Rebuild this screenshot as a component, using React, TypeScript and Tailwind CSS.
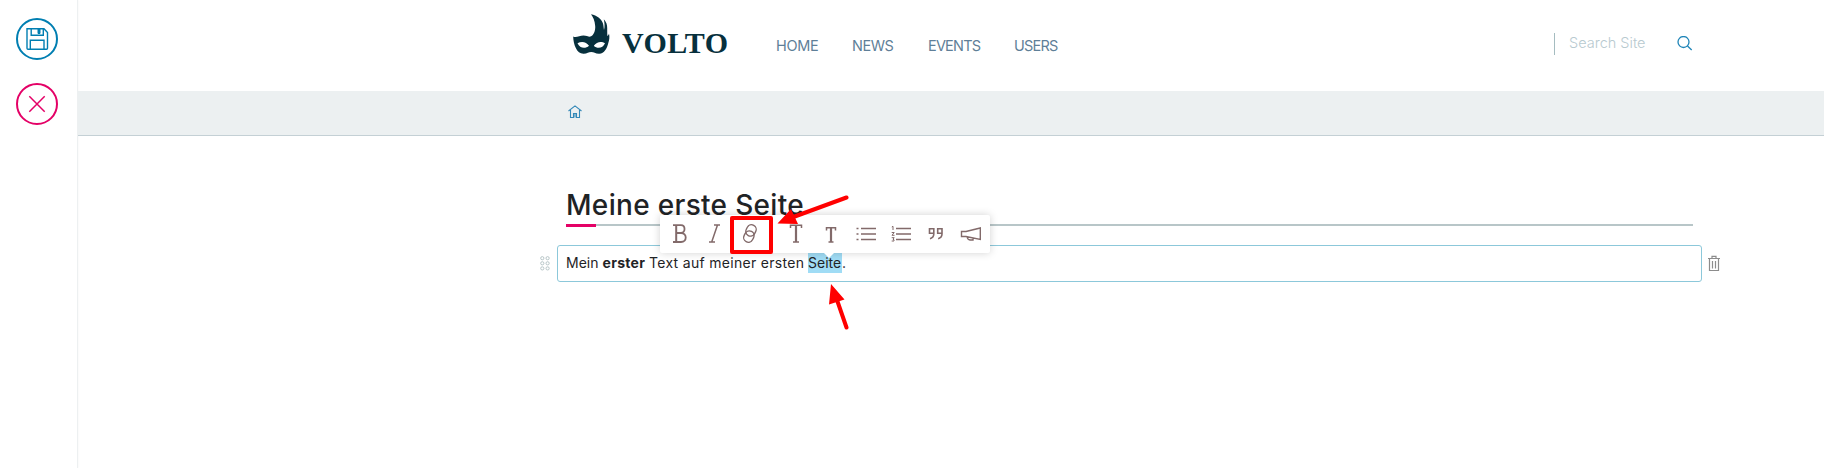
import React from "react";

const NAV = [
  { label: "HOME", box: "w-[76px]", track: "tracking-[-0.3px]" },
  { label: "NEWS", box: "w-[76px]", track: "tracking-[-0.45px]" },
  { label: "EVENTS", box: "w-[86px]", track: "tracking-[-0.8px]" },
  { label: "USERS", box: "w-[60px]", track: "tracking-[-0.8px]" },
];

function MaskLogo() {
  return (
    <svg className="block h-[41px] w-[37px]" viewBox="0 0 37 41" fill="#07303d">
      <path
        fillRule="evenodd"
        d="M.2 22.4C3 24 6.5 21.6 10.500 21.600C13.500 21.600 15.500 23 17.500 22.600C20.500 21.500 22.600 17 22.200 12C21.800 6.500 20 3 18 .300C24 1.500 28.300 5 29.800 9C30.600 11.500 30.600 14 31 16C32 12.500 31.600 9 30.800 5.200C33.500 8 34.200 11 34.200 14C34.200 17 34.200 19 34.400 22C35.400 21.300 35.800 20.500 36 19.500C36.800 23 36.300 26 35.300 29C34 34.500 31.300 39.500 26.300 39.700C22.300 39.800 21 38 18.200 38C15.500 38 14.200 39.800 10.300 39.700C3.800 39.500.300 30.500.200 22.400ZM4.500 29.300C7 34.700 12.500 35 16 31.700C13.500 27.800 8.500 26.800 4.500 29.300ZM20.800 31.700C24 35 29.700 34.700 32 29.300C28.500 26.800 23.500 27.800 20.800 31.700Z"
      />
    </svg>
  );
}

function SaveIcon() {
  return (
    <svg className="h-[42px] w-[42px]" viewBox="0 0 42 42" fill="none" stroke="#007eb1">
      <circle cx="21" cy="21" r="20" strokeWidth="2" />
      <g strokeWidth="1.4">
        <path d="M11 10.800H28L31.500 14.500V30.300Q31.500 31.200 30.500 31.200H12Q11 31.200 11 30.300Z" />
        <path d="M15.200 11V17.300H27.300V11M14.300 31V22.200H28V31" />
      </g>
      <path d="M22 11H24V15.500H22Z" fill="#007eb1" strokeWidth="1" />
    </svg>
  );
}

function CancelIcon() {
  return (
    <svg className="h-[42px] w-[42px]" viewBox="0 0 42 42" fill="none" stroke="#e40166">
      <circle cx="21" cy="21" r="20" strokeWidth="2" />
      <path d="M13.300 13.300L28.700 28.700M28.700 13.300L13.300 28.700" strokeWidth="1.500" />
    </svg>
  );
}

function Tool({ children }: { children: React.ReactNode }) {
  return (
    <button className="block h-6 w-6">
      <svg className="block h-6 w-6" viewBox="0 0 24 24" fill="none" stroke="#826a6a" strokeWidth="1.400">
        {children}
      </svg>
    </button>
  );
}

function Toolbar() {
  return (
    <div className="absolute left-[94px] top-0 flex h-[38px] w-[330px] items-center rounded-[2px] bg-white pl-2 shadow-[0_0_8px_rgba(0,0,0,0.18)]">
      <div className="flex gap-[11px]">
        <Tool>
          <path d="M5 3.200H13C17.700 3.200 17.700 11 13 11H8.500M13 11C19.300 11 19.300 20 13 20H5" strokeWidth="1.800" />
          <path d="M8.200 4V20" strokeWidth="2" />
        </Tool>
        <Tool>
          <path d="M11 3H17M6 20H12M14.500 3L8.700 20" strokeWidth="1.500" />
        </Tool>
        <Tool>
          <g transform="rotate(28 12 12)">
            <rect x="6.500" y="2.600" width="9.400" height="11.600" rx="4.700" />
            <rect x="7.500" y="9" width="9.400" height="11.600" rx="4.700" />
          </g>
        </Tool>
      </div>
      <div className="flex gap-[11px] pl-[22px]">
        <Tool>
          <path d="M6.500 6V3.300H17.500V6M9 20H15" strokeWidth="1.500" />
          <path d="M12 4V20" strokeWidth="2.200" />
        </Tool>
        <Tool>
          <path d="M7.500 8.500V5.800H16.500V8.500M9.500 20H14.500" strokeWidth="1.500" />
          <path d="M12 6V20" strokeWidth="2.200" />
        </Tool>
        <Tool>
          <path d="M7 6.500H22M7 12H22M7 17.500H22M2.500 6.500H4.500M2.500 12H4.500M2.500 17.500H4.500" strokeWidth="1.500" />
        </Tool>
        <Tool>
          <path d="M7 6.500H22M7 12H22M7 17.500H22" strokeWidth="1.500" />
          <path d="M2.800 5L4 4.300V8M2.700 10.500H5.200L3 13.300H5.500M2.700 15.700H5.200L4 17.200Q5.500 17.500 5 19H2.700" strokeWidth="1" />
        </Tool>
        <Tool>
          <path d="M9.800 11.300H5.500V6.700H9.800V12Q9.800 15.500 6 16.700M18 11.300H13.700V6.700H18V12Q18 15.500 14.200 16.700" strokeWidth="1.600" />
        </Tool>
        <Tool>
          <path d="M2.500 9.500H7L21.300 6V17.500L7 14.500H2.500ZM8.200 15Q8.500 17.700 11 18H14V16.500" strokeWidth="1.400" />
        </Tool>
      </div>
      <span className="absolute left-[164px] top-[38px] h-0 w-0 border-x-[5px] border-t-[5px] border-x-transparent border-t-white" />
    </div>
  );
}

function Annotations() {
  return (
    <>
      <div className="absolute left-[164px] top-[1px] h-[38px] w-[43px] rounded-[2px] border-[4px] border-[#ff0000]" />
      <svg className="absolute left-[204px] top-[-24px] h-[150px] w-[90px]" viewBox="770 191 90 150" fill="#ff0000" stroke="#ff0000">
        <path d="M846.500 197.500L792 217.500M846.500 327.500L837 300" strokeWidth="4" strokeLinecap="round" />
        <path d="M777.500 223.500L791 209L798 224ZM831 284L829 304.500L844.500 299.500Z" stroke="none" />
      </svg>
    </>
  );
}

export default function App() {
  return (
    <div className="flex h-[468px] w-[1824px] overflow-hidden bg-white font-['Inter','Noto_Sans',sans-serif]">
      <aside className="flex w-[78px] shrink-0 flex-col gap-[23px] border-r border-[#edf0f1] pl-4 pt-[18px] shadow-[0_0_2px_rgba(0,0,0,0.06)]">
        <SaveIcon />
        <CancelIcon />
      </aside>
      <div className="flex min-w-0 flex-1 flex-col">
        <header className="flex h-[91px] shrink-0 items-start pl-[495px]">
          <div className="flex w-[203px] pt-[14px]">
            <MaskLogo />
            <span className="ml-[12px] mt-[11px] font-['Liberation_Serif',serif] text-[30px] font-bold leading-[36px] tracking-[0.4px] text-[#07303d]">VOLTO</span>
          </div>
          <nav className="flex pt-[35px] text-[14.5px] leading-[22px] text-[#5f7f98]">
            {NAV.map((n) => (
              <a key={n.label} className={n.box + " " + n.track}>{n.label}</a>
            ))}
          </nav>
          <div className="ml-[480px] mt-[33px] flex h-[22px] items-center border-l border-[#a5bcc0] pl-[14px]">
            <span className="w-[108px] pb-[2px] text-[14.5px] font-light leading-[18px] text-[#b8cad0]">Search Site</span>
            <svg className="h-4 w-4" viewBox="0 0 16 16" fill="none" stroke="#1f85b8" strokeWidth="1.300">
              <circle cx="6.500" cy="6" r="5.500" />
              <path d="M10.500 10L14.700 14" />
            </svg>
          </div>
        </header>
        <div className="h-[45px] shrink-0 border-b border-[#c4d0d5] bg-[#ecf0f1] pl-[490px] pt-[14px]">
          <svg className="h-[14px] w-[14px]" viewBox="0 0 14 14" fill="none" stroke="#3489b8" strokeWidth="1.100">
            <path d="M.500 6L7 .900L13.500 6M2.500 5V12.500H5.500V8.500H8.500V12.500H11.500V5M7 8.500V12.500" />
          </svg>
        </div>
        <main className="pl-[488px] pt-[48px]">
          <h1 className="h-[40px] w-[1127px] whitespace-nowrap text-[28px] font-medium leading-[42px] tracking-[0.32px] text-[#1f2326]">Meine erste Seite</h1>
          <div className="flex h-[3px] w-[1127px] items-start">
            <span className="h-[3px] w-[30px] bg-[#e40166]" />
            <span className="h-[2px] flex-1 bg-[#b8c6c8]" />
          </div>
          <div className="relative ml-[-26px] mt-[18px] flex h-[37px] items-center">
            <svg className="mr-[7px] h-4 w-[10px]" viewBox="0 0 10 16" fill="none" stroke="#b8c6c8" strokeWidth="1">
              {[2.2, 7.3, 12.4].map((y) => (
                <g key={y}>
                  <circle cx="2.300" cy={y} r="1.600" />
                  <circle cx="7.600" cy={y} r="1.600" />
                </g>
              ))}
            </svg>
            <div className="h-[37px] w-[1145px] rounded-[3px] border border-[#8cc8da] pl-2 pt-[6px] text-[14px] leading-[21px] text-[#1f2326]">
              <p className="flex whitespace-nowrap">
                <span className="w-[36.5px]">Mein</span>
                <strong className="w-[46.5px] font-bold tracking-[0.3px]">erster</strong>
                <span className="w-[159px] tracking-[0.3px]">Text auf meiner ersten</span>
                <mark className="h-[21px] w-[34px] bg-[#a0dcf5] text-inherit">Seite</mark>
                <span>.</span>
              </p>
            </div>
            <svg className="ml-[6px] h-[17px] w-[12px]" viewBox="0 0 12 17" fill="none" stroke="#8c8c8c" strokeWidth="1.200">
              <path d="M0 3.500H12M4 3V1.300H8V3M1.500 4V15.500H10.500V4M4.500 6V13.500M7.500 6V13.500" />
            </svg>
            <div className="absolute left-[26px] top-[-30px] h-0 w-0">
              <Toolbar />
              <Annotations />
            </div>
          </div>
        </main>
      </div>
    </div>
  );
}
